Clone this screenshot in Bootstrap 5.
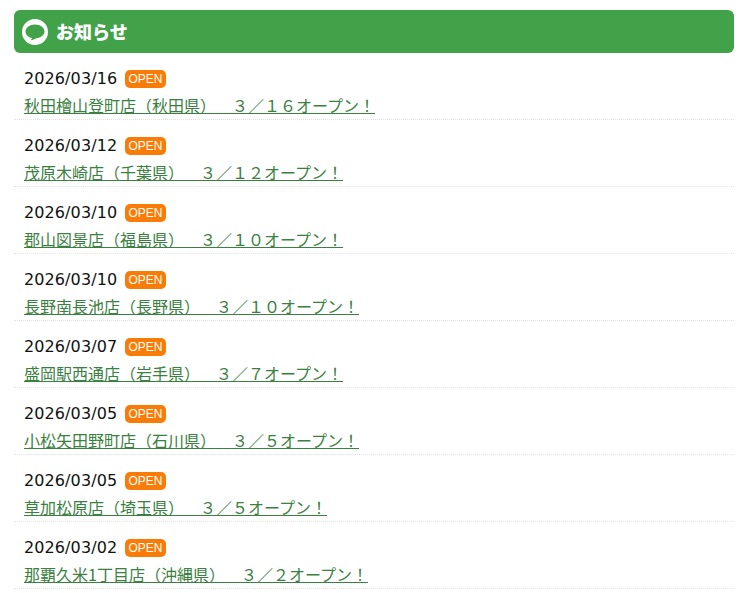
<!DOCTYPE html>
<html lang="ja">
<head>
    <meta charset="UTF-8">
    <title>お知らせ</title>
    <link href="https://cdn.jsdelivr.net/npm/bootstrap@5.3.3/dist/css/bootstrap.min.css" rel="stylesheet">
    <style>
        body {
            font-family: "DejaVu Sans", "Noto Sans CJK JP", sans-serif;
            font-size: 16px;
            color: #111;
            background: #fff;
        }

        .news-wrap {
            padding: 10px 10px 0 14px;
        }

        .news-head {
            height: 43px;
            background: #42a249;
            border-radius: 6px;
            color: #fff;
            padding-left: 8px;
        }

        .news-head h2 {
            font-family: "Noto Sans CJK JP", sans-serif;
            font-size: 18px;
            font-weight: 900;
            margin: 0;
        }

        .news-row {
            height: 67px;
            padding: 14px 0 0 10px;
            border-bottom: 1px dotted #e2e2e2;
        }

        .news-date {
            line-height: 24px;
            width: 93px;
            letter-spacing: .1px;
        }

        .open-tag {
            width: 41px;
            height: 18px;
            background: #f97c06;
            border-radius: 5px;
            color: #fff;
            font-family: "Liberation Sans", sans-serif;
            font-size: 12px;
            line-height: 18px;
            text-align: center;
        }

        .news-link {
            display: inline-block;
            line-height: 24px;
            margin-top: 2px;
            color: #3a8040;
            font-family: "Noto Sans CJK JP", sans-serif;
            text-spacing-trim: space-all;
        }
    </style>
</head>
<body>

<div class="news-wrap">
    <div class="news-head d-flex align-items-center gap-2">
        <svg width="26" height="26" viewBox="0 0 26 26">
            <circle cx="13" cy="13" r="13" fill="#fff"/>
            <path d="M13 5.500C7.500 5.500 3.500 8.800 3.500 12.500C3.500 15.700 6.200 18.300 10 19C9.800 19.800 9.200 20.600 8.500 21.200C10.800 21 12.800 20.200 14.200 19.200C19 18.800 22.500 16 22.500 12.500C22.500 8.800 18.500 5.500 13 5.500Z" fill="#42a249"/>
        </svg>
        <h2>お知らせ</h2>
    </div>

    <div id="news-list"></div>
</div>

<script>
    const newsItems = [
        ['2026/03/16', '秋田檜山登町店（秋田県）　３／１６オープン！'],
        ['2026/03/12', '茂原木崎店（千葉県）　３／１２オープン！'],
        ['2026/03/10', '郡山図景店（福島県）　３／１０オープン！'],
        ['2026/03/10', '長野南長池店（長野県）　３／１０オープン！'],
        ['2026/03/07', '盛岡駅西通店（岩手県）　３／７オープン！'],
        ['2026/03/05', '小松矢田野町店（石川県）　３／５オープン！'],
        ['2026/03/05', '草加松原店（埼玉県）　３／５オープン！'],
        ['2026/03/02', '那覇久米1丁目店（沖縄県）　３／２オープン！']
    ];

    const list = document.getElementById('news-list');
    newsItems.forEach(item => {
        const row = document.createElement('div');
        row.className = 'news-row';
        row.innerHTML = `
            <div class="d-flex align-items-center gap-2">
                <span class="news-date">${item[0]}</span>
                <span class="open-tag">OPEN</span>
            </div>
            <a class="news-link" href="#">${item[1]}</a>
        `;
        list.appendChild(row);
    });
</script>
<script src="https://cdn.jsdelivr.net/npm/bootstrap@5.3.3/dist/js/bootstrap.bundle.min.js"></script>
</body>
</html>
